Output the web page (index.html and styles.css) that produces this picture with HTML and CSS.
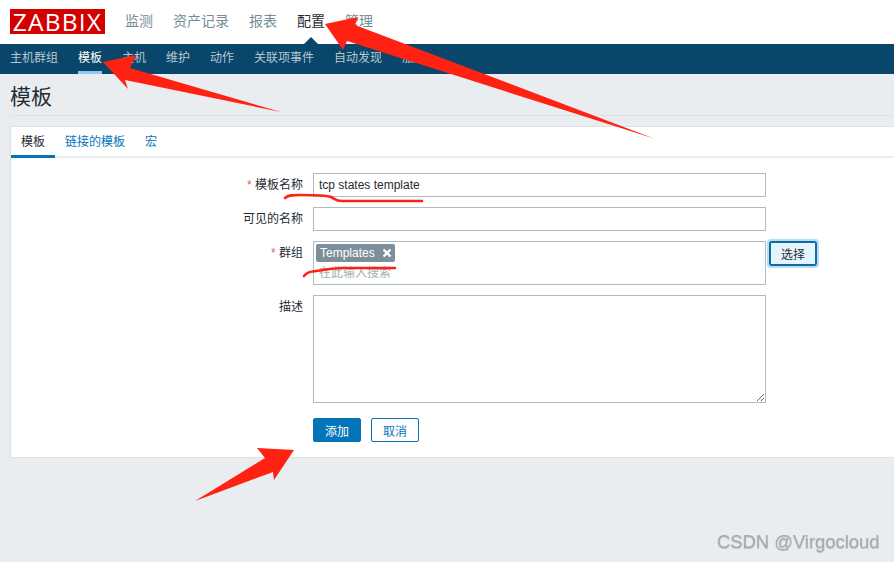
FILE: index.html
```html
<!DOCTYPE html>
<html lang="zh">
<head>
<meta charset="utf-8">
<title>模板</title>
<link rel="stylesheet" href="styles.css">
</head>
<body>
<header class="topbar">
  <div class="logo">ZABBIX</div>
  <nav class="mainnav">
    <a>监测</a><a>资产记录</a><a>报表</a><a class="current">配置</a><a>管理</a>
  </nav>
</header>
<nav class="subnav">
  <a>主机群组</a><a class="current">模板</a><a>主机</a><a>维护</a><a>动作</a><a>关联项事件</a><a>自动发现</a><a>服务</a>
</nav>
<main class="content">
  <h1 class="title">模板</h1>
  <section class="card">
    <div class="tabs">
      <a class="tab current">模板</a><a class="tab">链接的模板</a><a class="tab">宏</a>
    </div>
    <form class="form">
      <label class="lbl"><span class="req">*</span> 模板名称</label>
      <input class="field" type="text" value="tcp states template">
      <span></span>

      <label class="lbl">可见的名称</label>
      <input class="field" type="text">
      <span></span>

      <label class="lbl lbl-top"><span class="req">*</span> 群组</label>
      <div class="multi">
        <span class="chip">Templates<svg class="chip-x" width="10" height="10" viewBox="0 0 10 10" aria-hidden="true"><path d="M1.5 1.5 8.5 8.5M8.5 1.5 1.5 8.5"/></svg></span>
        <span class="hint">在此输入搜索</span>
      </div>
      <div class="pick"><button class="btn-select" type="button">选择</button></div>

      <label class="lbl lbl-top">描述</label>
      <textarea class="area"></textarea>
      <span></span>

      <span></span>
      <div class="actions">
        <button class="btn btn-primary" type="button">添加</button>
        <button class="btn btn-outline" type="button">取消</button>
      </div>
    </form>
  </section>
</main>
<svg class="marks" width="894" height="562" viewBox="0 0 894 562" aria-hidden="true">
  <polygon class="red" points="325,24 358,17 355,25 654,138.5 347,41 343,50"/>
  <polygon class="red" points="103,62 136,55 130,68 281,112 125,80 128,89"/>
  <polygon class="red" points="294,450 257,448 265,458 195,501 273,472 274,480"/>
  <path class="stroke" d="M285 198 C288 195 293 195 300 195 C312 195 325 195 331 197 C335 199 336 201 342 201 L422 201"/>
  <path class="stroke" d="M304 276 C307 272 310 272 316 271 C325 270 332 268 342 268 L395 268"/>
</svg>
<div class="watermark">CSDN @Virgocloud</div>
</body>
</html>
```
FILE: styles.css
```css
* { box-sizing: border-box; }
html, body { margin: 0; height: 562px; overflow: hidden; }
body {
  position: relative;
  background: #e9edf0;
  color: #1f2c33;
  font: 12px "Liberation Sans", "Noto Sans CJK SC", sans-serif;
}
.topbar {
  height: 44px;
  background: #fff;
  display: flex;
  align-items: center;
  padding-left: 10px;
}
.logo {
  width: 95px;
  height: 25px;
  margin-top: -1px;
  background: #d40000;
  color: #fff;
  font-family: "Open Sans", sans-serif;
  font-weight: 400;
  font-size: 24.5px;
  line-height: 25px;
  letter-spacing: 1.2px;
  text-align: center;
}
.mainnav { display: flex; gap: 20px; margin-left: 20px; font-size: 14px; color: #768d99; margin-top: -4px; }
.mainnav .current { color: #1f2c33; position: relative; }
.mainnav .current::after {
  content: "";
  position: absolute;
  left: 6px;
  top: 27px;
  border: 8px solid transparent;
  border-top: 0;
  border-bottom-color: #0a466a;
}
.subnav {
  height: 30px;
  background: #0a466a;
  display: flex;
  gap: 20px;
  padding-left: 10px;
  color: #b6c8d3;
  line-height: 28px;
}
.subnav a { height: 30px; }
.subnav .current { color: #fff; border-bottom: 3px solid #8ccbf2; }
.content { padding: 0 0 0 10px; }
.title {
  margin: 0;
  height: 42px;
  border-bottom: 1px solid #dde2e6;
  font-size: 21px;
  font-weight: 400;
  line-height: 46px;
  color: #1f2c33;
}
.card {
  margin-top: 10px;
  height: 332px;
  background: #fff;
  border: 1px solid #dde2e6;
  border-right: 0;
}
.tabs {
  height: 31px;
  display: flex;
  border-bottom: 2px solid #ebeef0;
  color: #0275b8;
  line-height: 30px;
}
.tab { padding: 0 10px; height: 31px; }
.tab.current { color: #1f2c33; border-bottom: 3px solid #0275b8; }
.form {
  display: grid;
  grid-template-columns: 292px 453px auto;
  column-gap: 10px;
  row-gap: 10px;
  padding-top: 15px;
}
.lbl { text-align: right; line-height: 24px; }
.lbl-top { line-height: 24px; }
.req { color: #e45959; }
.field, .area, .multi {
  border: 1px solid #acbbc4;
  background: #fff;
  margin: 0;
  border-radius: 0;
  font: inherit;
  color: #1f2c33;
  width: 453px;
}
.field { height: 24px; padding: 0 5px; }
.multi { height: 44px; padding: 2px 2px; display: flex; flex-direction: column; align-items: flex-start; }
.chip {
  height: 18px;
  width: 79px;
  padding-left: 4px;
  display: flex;
  align-items: center;
  gap: 7px;
  background: #7c8f9b;
  color: #fff;
  border-radius: 2px;
  line-height: 18px;
  white-space: nowrap;
}
.chip-x { fill: none; stroke: #fff; stroke-width: 2.4; }
.hint { color: #a5aeb4; margin: 2px 0 0 3px; line-height: 18px; }
.pick { margin-left: -7px; }
.btn-select {
  width: 48px;
  height: 25px;
  padding: 0;
  background: #e6f4fd;
  border: 2px solid #0f6ca5;
  border-radius: 2px;
  outline: 2px solid #b9dcf5;
  font: inherit;
  color: #1f2c33;
}
.area { height: 108px; display: block; }
.actions { display: flex; gap: 10px; margin-top: 5px; }
.btn {
  width: 48px;
  height: 24px;
  padding: 0;
  border: 1px solid #0275b8;
  border-radius: 2px;
  font: inherit;
}
.btn-primary { background: #0275b8; color: #fff; }
.btn-outline { background: #fff; color: #0275b8; }
.marks { position: absolute; left: 0; top: 0; pointer-events: none; }
.red { fill: #ff2212; }
.stroke { fill: none; stroke: #ff2212; stroke-width: 2.6; stroke-linecap: round; }
.watermark {
  position: absolute;
  left: 717px;
  top: 531px;
  color: #a9abad;
  font-size: 18.4px;
  line-height: 22px;
  white-space: nowrap;
  text-shadow: 0 1px 0 #c4c4c4;
}
```
